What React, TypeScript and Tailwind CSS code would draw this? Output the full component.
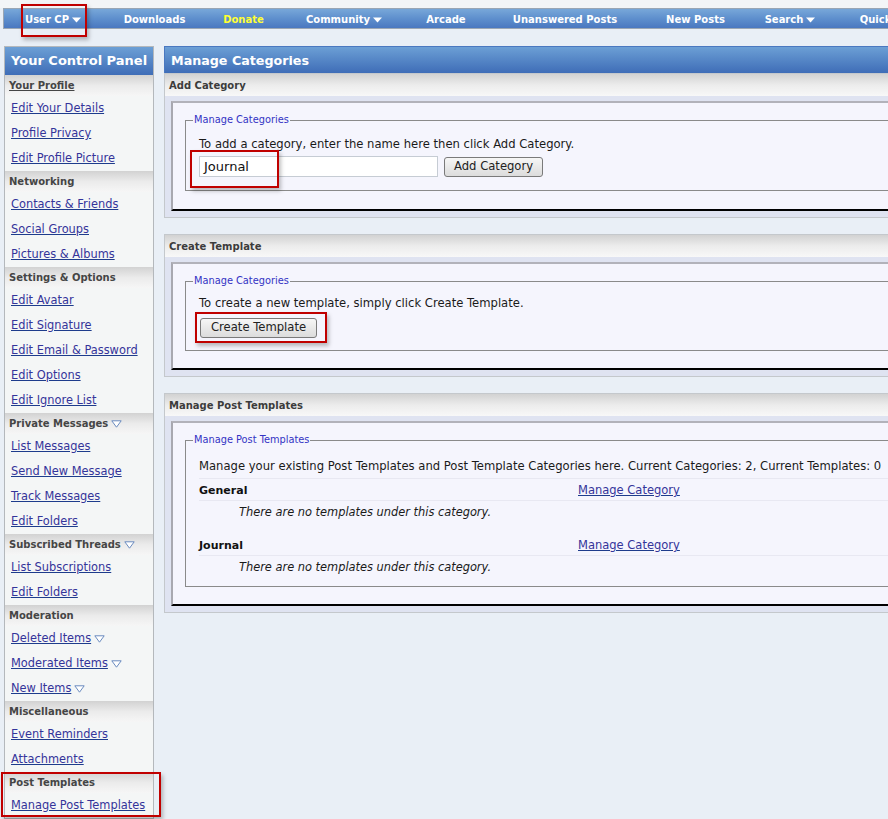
import React from "react";

function NavArrow() {
  return (
    <svg width="9" height="6" viewBox="0 0 9 6" className="inline-block ml-[3px] align-middle">
      <path d="M0 0.5 H9 L4.5 5.5 Z" fill="#ffffff" />
    </svg>
  );
}

function OutlineArrow() {
  return (
    <svg width="11" height="8" viewBox="0 0 11 8" className="inline-block ml-[3px] align-[0px]">
      <path d="M0.8 0.8 H10.2 L5.5 7.2 Z" fill="#ffffff" stroke="#6a8bbf" strokeWidth="1" />
    </svg>
  );
}

type Item = { label: string; arrow?: boolean };
type Section = { title: string; titleLink?: boolean; arrow?: boolean; items: Item[] };

const sections: Section[] = [
  { title: "Your Profile", titleLink: true, items: [{ label: "Edit Your Details" }, { label: "Profile Privacy" }, { label: "Edit Profile Picture" }] },
  { title: "Networking", items: [{ label: "Contacts & Friends" }, { label: "Social Groups" }, { label: "Pictures & Albums" }] },
  {
    title: "Settings & Options",
    items: [{ label: "Edit Avatar" }, { label: "Edit Signature" }, { label: "Edit Email & Password" }, { label: "Edit Options" }, { label: "Edit Ignore List" }],
  },
  { title: "Private Messages", arrow: true, items: [{ label: "List Messages" }, { label: "Send New Message" }, { label: "Track Messages" }, { label: "Edit Folders" }] },
  { title: "Subscribed Threads", arrow: true, items: [{ label: "List Subscriptions" }, { label: "Edit Folders" }] },
  { title: "Moderation", items: [{ label: "Deleted Items", arrow: true }, { label: "Moderated Items", arrow: true }, { label: "New Items", arrow: true }] },
  { title: "Miscellaneous", items: [{ label: "Event Reminders" }, { label: "Attachments" }] },
  { title: "Post Templates", items: [{ label: "Manage Post Templates" }] },
];

const navItems: { label: string; w: string; arrow?: boolean; yellow?: boolean }[] = [
  { label: "User CP", w: "w-[98px]", arrow: true },
  { label: "Downloads", w: "w-[105px]" },
  { label: "Donate", w: "w-[73px]", yellow: true },
  { label: "Community", w: "w-[128px]", arrow: true },
  { label: "Arcade", w: "w-[76px]" },
  { label: "Unanswered Posts", w: "w-[162px]" },
  { label: "New Posts", w: "w-[99px]" },
  { label: "Search", w: "w-[90px]", arrow: true },
  { label: "Quick Links", w: "w-[126px]", arrow: true },
];

function RedBox({ className }: { className: string }) {
  return (
    <div
      className={`absolute border-2 border-[#c00000] shadow-[2px_3px_4px_rgba(0,0,0,0.25)] pointer-events-none ${className}`}
    />
  );
}

function Panel({ title, children, innerPb }: { title: string; children: React.ReactNode; innerPb: string }) {
  return (
    <div className="border border-[#c4c8cc] bg-[#dfe3f1]">
      <div className="h-[22px] flex items-center pt-[1px] pl-[4px] bg-gradient-to-b from-[#d2d2d2] via-[#ececec] to-[#f8f8f8] text-[10px] font-bold text-[#3c3c3c]">
        {title}
      </div>
      <div className="pt-[5px] px-[6px] pb-[6px]">
        <div
          className={`border-t-2 border-l-2 border-t-[#b2b2ba] border-l-[#a8a8b0] border-b-2 border-b-black bg-[#f5f5fd] px-[12px] pt-[10px] ${innerPb}`}
        >
          {children}
        </div>
      </div>
    </div>
  );
}

function Legend({ children }: { children: React.ReactNode }) {
  return <legend className="ml-[-6px] px-[1px] text-[9.8px] leading-[14px] text-[#3333c4]">{children}</legend>;
}

const btn =
  "border border-[#7a7a7a] rounded-[3px] bg-gradient-to-b from-[#f6f6f6] to-[#dcdcdc] flex items-center text-[11.6px] text-[#222]";

export default function App() {
  return (
    <div className="w-[888px] min-h-[819px] overflow-hidden bg-[#e9eff6] font-['DejaVu_Sans',Verdana,sans-serif] relative">
      {/* top strip */}
      <div className="h-[8px] bg-[#f3f5f7]" />
      {/* nav bar */}
      <div className="relative ml-[3px] h-[21px] pt-[2px] border-t border-b border-[#9aa6b4] border-l bg-gradient-to-b from-[#78a7d9] via-[#5e8fcd] to-[#4a78c0] flex items-center whitespace-nowrap">
        {navItems.map((n) => (
          <div key={n.label} className={`${n.w} shrink-0 text-center text-[10px] font-bold ${n.yellow ? "text-[#ffff33]" : "text-white"}`}>
            {n.label}
            {n.arrow && <NavArrow />}
          </div>
        ))}
        <RedBox className="left-[17px] top-[-5px] w-[66px] h-[33px]" />
      </div>

      <div className="flex items-start gap-[10px] pl-[4px] pt-[17px]">
        {/* sidebar */}
        <div className="relative w-[150px] shrink-0 border border-[#b4b8bc] bg-[#f4f6f6]">
          <div className="h-[28px] flex items-center pb-[1px] pl-[6px] bg-gradient-to-b from-[#6c9fd5] to-[#3f6db7] text-white font-bold text-[13px] whitespace-nowrap">
            Your Control Panel
          </div>
          {sections.map((s) => (
            <div key={s.title}>
              <div className="h-[21px] flex items-center pl-[4px] bg-gradient-to-b from-[#d2d2d2] via-[#ebebeb] to-[#f6f6f6] text-[10px] font-bold text-[#454545] whitespace-nowrap">
                <span className={s.titleLink ? "underline" : ""}>{s.title}</span>
                {s.arrow && <OutlineArrow />}
              </div>
              {s.items.map((it) => (
                <div key={it.label} className="h-[25px] flex items-center pl-[6px] text-[11.4px] whitespace-nowrap">
                  <span className="underline text-[#34349a] decoration-[#1e3c8c]">{it.label}</span>
                  {it.arrow && <OutlineArrow />}
                </div>
              ))}
            </div>
          ))}
          <RedBox className="left-[-4px] top-[725px] w-[160px] h-[45px]" />
        </div>

        {/* main */}
        <div className="w-[780px] shrink-0 flex flex-col gap-[16px]">
          <div>
            <div className="h-[27px] border border-b-0 border-[#4a78c0] flex items-center pt-[1px] pl-[6px] bg-gradient-to-b from-[#6c9fd5] to-[#3f6db7] text-white font-bold text-[12.7px]">
              Manage Categories
            </div>
            <Panel title="Add Category" innerPb="pb-[18px]">
              <fieldset className="border border-[#8a8a8a] px-[13px] pb-[13px]">
                <Legend>Manage Categories</Legend>
                <div className="pt-[10px] text-[11.6px] leading-[15px] text-[#1a1a1a]">
                  To add a category, enter the name here then click Add Category.
                </div>
                <div className="relative mt-[4px] flex items-center gap-[6px]">
                  <div className="w-[239px] h-[21px] border border-[#c6ccd4] bg-white flex items-center pl-[4px] text-[13px] text-[#111]">
                    Journal
                  </div>
                  <div className={`h-[20px] px-[9px] ${btn}`}>Add Category</div>
                  <RedBox className="left-[-9px] top-[-6px] w-[89px] h-[38px]" />
                </div>
              </fieldset>
            </Panel>
          </div>

          <Panel title="Create Template" innerPb="pb-[17px]">
            <fieldset className="border border-[#8a8a8a] px-[13px] pb-[12px]">
              <Legend>Manage Categories</Legend>
              <div className="pt-[8px] text-[11.6px] leading-[15px] text-[#1a1a1a]">
                To create a new template, simply click Create Template.
              </div>
              <div className="relative mt-[7px] ml-[1px] flex">
                <div className={`h-[20px] px-[10px] ${btn}`}>Create Template</div>
                <RedBox className="left-[-5px] top-[-6px] w-[132px] h-[31px]" />
              </div>
            </fieldset>
          </Panel>

          <Panel title="Manage Post Templates" innerPb="pb-[17px]">
            <fieldset className="border border-[#8a8a8a] px-[13px] pb-[8px]">
              <Legend>Manage Post Templates</Legend>
              <div className="pt-[12px] h-[32px] border-b border-[#e8e8f2] text-[11.6px] leading-[15px] text-[#1a1a1a] whitespace-nowrap">
                Manage your existing Post Templates and Post Template Categories here. Current Categories: 2, Current Templates: 0
              </div>
              {["General", "Journal"].map((c, i) => (
                <div key={c} className={i === 1 ? "mt-[11px]" : ""}>
                  <div className="h-[22px] flex items-end pb-[3px] border-b border-[#e8e8f2]">
                    <span className="w-[379px] text-[11px] leading-[13px] font-bold text-[#111]">{c}</span>
                    <span className="text-[11.5px] leading-[13px] underline text-[#34349a] decoration-[#1e3c8c]">Manage Category</span>
                  </div>
                  <div className="h-[22px] flex items-center pt-[1px] pl-[40px] text-[11.4px] italic text-[#1a1a1a]">
                    There are no templates under this category.
                  </div>
                </div>
              ))}
            </fieldset>
          </Panel>
        </div>
      </div>
    </div>
  );
}
